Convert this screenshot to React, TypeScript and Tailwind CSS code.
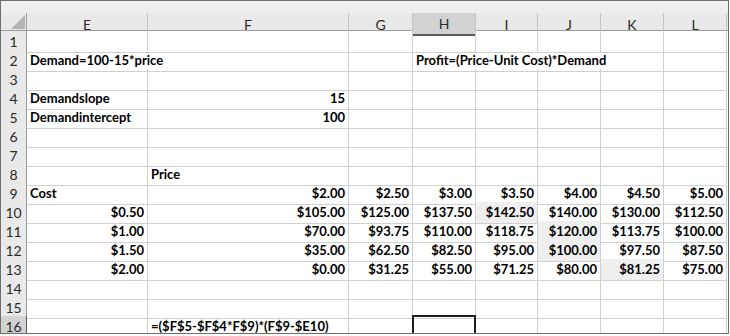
import clsx from 'clsx';

type C = { t?: string; r?: boolean; bg?: boolean; noR?: boolean };

const LETTERS = ['E', 'F', 'G', 'H', 'I', 'J', 'K', 'L'];

const money = (row: string[]): C[] => row.map((t) => ({ t, r: true }));

const ROWS: C[][] = [
  [],
  [{ t: 'Demand=100-15*price', noR: true }, {}, {}, { t: 'Profit=(Price-Unit Cost)*Demand', noR: true }, { noR: true }, { noR: true }],
  [],
  [{ t: 'Demandslope' }, { t: '15', r: true }],
  [{ t: 'Demandintercept' }, { t: '100', r: true }],
  [],
  [],
  [{}, { t: 'Price' }],
  [{ t: 'Cost' }, ...money(['$2.00', '$2.50', '$3.00', '$3.50', '$4.00', '$4.50', '$5.00'])],
  money(['$0.50', '$105.00', '$125.00', '$137.50', '$142.50', '$140.00', '$130.00', '$112.50']),
  money(['$1.00', '$70.00', '$93.75', '$110.00', '$118.75', '$120.00', '$113.75', '$100.00']),
  money(['$1.50', '$35.00', '$62.50', '$82.50', '$95.00', '$100.00', '$97.50', '$87.50']),
  money(['$2.00', '$0.00', '$31.25', '$55.00', '$71.25', '$80.00', '$81.25', '$75.00']),
  [],
  [],
  [{}, { t: '=($F$5-$F$4*F$9)*(F$9-$E10)' }],
];

// light shaded cells (row index, col index)
const SHADED = ['9-4', '10-5', '11-5', '12-6'];

const GRID = 'grid grid-cols-[26px_121px_201px_64px_63px_62px_63px_63px_63px]';

export default function App() {
  return (
    <div className="w-[730px] h-[336px] bg-white" style={{ fontFamily: 'Lato, "Open Sans", sans-serif' }}>
      <div className="w-[729px] h-[334px] border border-[#6f6f6f] overflow-hidden bg-white">
        {/* strip above headers */}
        <div className="h-[12px] bg-[#eeeeee]" />

        {/* column headers */}
        <div className={clsx(GRID, 'h-[18px] bg-[#e9e9e9] border-b border-[#9c9c9c]')}>
          <div className="relative border-r border-[#9c9c9c]">
            <svg width="26" height="18" className="absolute inset-0">
              <polygon points="10,16 24,16 24,2" fill="#b4b4b4" />
            </svg>
          </div>
          {LETTERS.map((l) => (
            <div
              key={l}
              className={clsx(
                'flex items-center justify-center text-[14px] text-[#2a2a2a] border-r border-[#c4c4c4]',
                l === 'H' && 'bg-[#d2d2d2] border-b-2 border-b-[#5a5a5a]'
              )}
            >
              {l}
            </div>
          ))}
        </div>

        {/* rows */}
        {ROWS.map((row, ri) => (
          <div key={ri} className={clsx(GRID, 'h-[19px]')}>
            <div
              className={clsx(
                'flex items-center justify-center text-[14px] text-[#2a2a2a] border-b border-[#c8c8c8] border-r',
                ri === 15 ? 'bg-[#d2d2d2] border-r-[#5a5a5a]' : 'bg-[#e9e9e9] border-r-[#9c9c9c]'
              )}
            >
              {ri + 1}
            </div>
            {LETTERS.map((_, ci) => {
              const c = row[ci] ?? {};
              const shaded = SHADED.includes(`${ri}-${ci}`);
              const selected = ri === 15 && ci === 3;
              return (
                <div
                  key={ci}
                  className={clsx(
                    'relative flex items-center px-[3px] whitespace-nowrap text-[13px] font-bold text-black border-b border-[#d0d0d0]',
                    c.r && 'justify-end',
                    !c.noR && 'border-r',
                    c.noR && 'z-10',
                    shaded && 'bg-[#efefef]'
                  )}
                >
                  {c.t}
                  {selected && (
                    <div className="absolute -left-px -top-px -right-px -bottom-px border-2 border-[#1e1e1e]">
                      <div className="absolute -right-[4px] -bottom-[4px] w-[5px] h-[5px] bg-[#1e1e1e] border border-white" />
                    </div>
                  )}
                </div>
              );
            })}
          </div>
        ))}
      </div>
    </div>
  );
}
